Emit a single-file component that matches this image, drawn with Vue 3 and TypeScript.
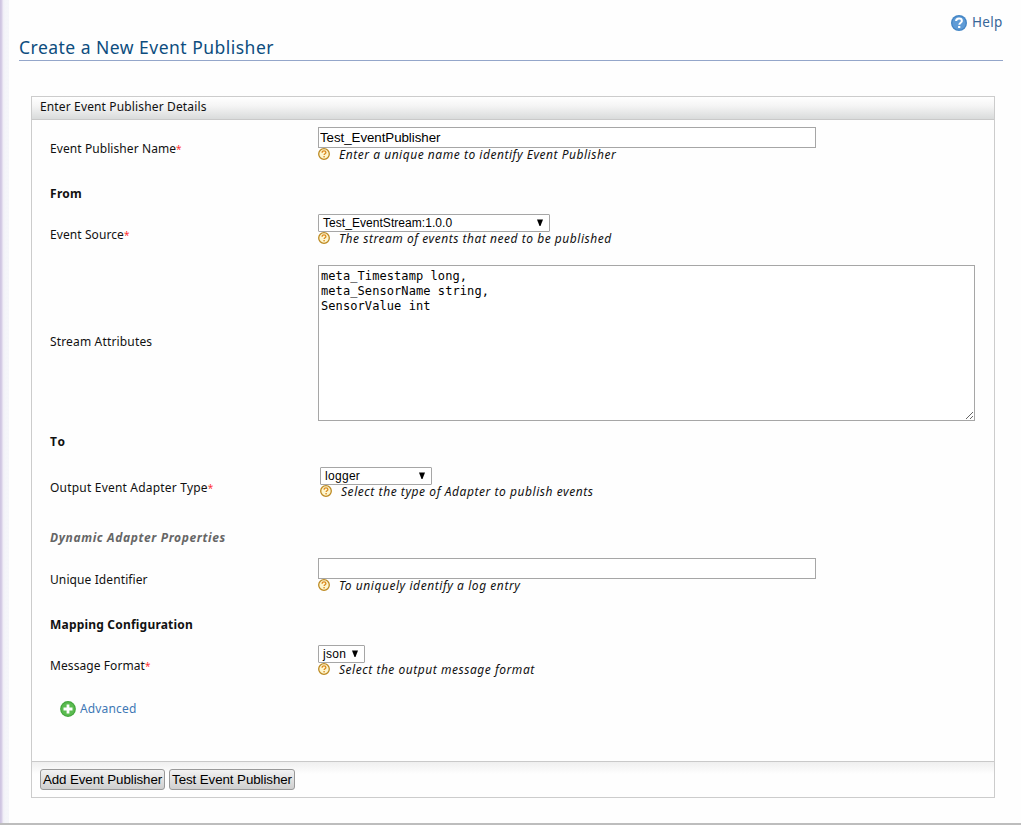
<script setup lang="ts">
import { ref } from 'vue'

const publisherName = ref('Test_EventPublisher')
const uniqueIdentifier = ref('')
const attributes = ref('meta_Timestamp long,\nmeta_SensorName string,\nSensorValue int')
</script>

<template>
  <div class="page">
    <svg class="defs" width="0" height="0" aria-hidden="true">
      <symbol id="hint-icon" viewBox="0 0 12 12">
        <circle cx="6" cy="6" r="5.3" fill="#fdf6cf" stroke="#bd8a22" stroke-width="1.3" />
        <path d="M4.1 4.7C4.1 3.4 5 2.9 6 2.9s1.9.6 1.9 1.6c0 1.2-1.8 1.3-1.8 2.6" fill="none" stroke="#dc8a1e" stroke-width="1.3" />
        <rect x="5.4" y="8" width="1.4" height="1.4" fill="#dc8a1e" />
      </symbol>
    </svg>

    <div class="help-bar">
      <svg width="16" height="16" viewBox="0 0 16 16">
        <circle cx="8" cy="8" r="8" fill="#4486c6" />
        <circle cx="8" cy="8" r="6.6" fill="#5f9bd6" />
        <path d="M5.1 6.1C5.1 4.4 6.3 3.5 8 3.5s2.9.9 2.9 2.4c0 1.8-2.6 1.9-2.6 3.9" fill="none" stroke="#fff" stroke-width="2" />
        <rect x="7.1" y="11" width="2.2" height="2" fill="#fff" />
      </svg>
      <a class="help">Help</a>
    </div>
    <h2 class="title"><span>Create a New Event Publisher</span></h2>

    <form class="panel" @submit.prevent>
      <div class="panel-head"><span class="t-head">Enter Event Publisher Details</span></div>
      <div class="panel-body">
        <div class="row r-name">
          <label><span class="t-name">Event Publisher Name</span><i class="req">*</i></label>
          <div class="field">
            <input v-model="publisherName" type="text" />
            <p class="hint"><svg><use href="#hint-icon" /></svg><span class="h-name">Enter a unique name to identify Event Publisher</span></p>
          </div>
        </div>
        <div class="row r-from"><b class="t-from">From</b></div>
        <div class="row r-source">
          <label><span class="t-source">Event Source</span><i class="req">*</i></label>
          <div class="field">
            <div class="select s-source"><span>Test_EventStream:1.0.0</span><svg width="6" height="7"><path d="M0 0.5H6L3.5 7H2.5Z" /></svg></div>
            <p class="hint"><svg><use href="#hint-icon" /></svg><span class="h-source">The stream of events that need to be published</span></p>
          </div>
        </div>
        <div class="row r-attrs">
          <label><span class="t-attrs">Stream Attributes</span></label>
          <div class="field"><textarea v-model="attributes" spellcheck="false"></textarea></div>
        </div>
        <div class="row r-to"><b class="t-to">To</b></div>
        <div class="row r-type">
          <label><span class="t-type">Output Event Adapter Type</span><i class="req">*</i></label>
          <div class="field">
            <div class="select s-type"><span>logger</span><svg width="6" height="7"><path d="M0 0.5H6L3.5 7H2.5Z" /></svg></div>
            <p class="hint"><svg><use href="#hint-icon" /></svg><span class="h-type">Select the type of Adapter to publish events</span></p>
          </div>
        </div>
        <div class="row r-dyn"><b class="t-dyn">Dynamic Adapter Properties</b></div>
        <div class="row r-uid">
          <label><span class="t-uid">Unique Identifier</span></label>
          <div class="field">
            <input v-model="uniqueIdentifier" type="text" />
            <p class="hint"><svg><use href="#hint-icon" /></svg><span class="h-uid">To uniquely identify a log entry</span></p>
          </div>
        </div>
        <div class="row r-map"><b class="t-map">Mapping Configuration</b></div>
        <div class="row r-format">
          <label><span class="t-format">Message Format</span><i class="req">*</i></label>
          <div class="field">
            <div class="select s-format"><span>json</span><svg width="6" height="7"><path d="M0 0.5H6L3.5 7H2.5Z" /></svg></div>
            <p class="hint"><svg><use href="#hint-icon" /></svg><span class="h-format">Select the output message format</span></p>
          </div>
        </div>
        <div class="row r-adv">
          <svg width="16" height="16" viewBox="0 0 16 16">
            <circle cx="8" cy="8" r="7.9" fill="#43a63c" />
            <circle cx="8" cy="8" r="6.7" fill="#5bbb50" />
            <path d="M8 3.5V12.5M3.5 8H12.5" stroke="#fff" stroke-width="2.8" />
          </svg>
          <a class="t-adv">Advanced</a>
        </div>
      </div>
      <div class="panel-foot">
        <button type="button" class="b-add">Add Event Publisher</button>
        <button type="button" class="b-test">Test Event Publisher</button>
      </div>
    </form>
  </div>
</template>

<style>
body { background: #fdfdfd; overflow: hidden; }
</style>

<style scoped>
* { box-sizing: border-box; }
.page {
  height: 825px;
  padding: 14px 18px 0 19px;
  border-bottom: 2px solid #bdbdbd;
  background: linear-gradient(90deg, #cbc1df 0, #d9d1e8 2px, #efedf6 3px, #f4f5f9 5px, #f5f6fa 9px, transparent 9px) #fefefe;
  font: 12px/16px "Noto Sans", "Open Sans", sans-serif;
  color: #111;
}
.defs { position: absolute; }
.help-bar { display: flex; justify-content: flex-end; align-items: center; gap: 5px; height: 17px; padding-top: 1px; }
.help { font-size: 13.5px; letter-spacing: .3px; color: #386698; width: 31px; white-space: nowrap; margin-top: -2px; }
.title {
  margin: 0; height: 30px; border-bottom: 1px solid #94a6ca;
  font-size: 17.5px; font-weight: 400; line-height: 33px; letter-spacing: .48px; color: #0d4d7e; white-space: nowrap;
}
.panel { width: 964px; height: 702px; margin: 35px 0 0 12px; border: 1px solid #ccc; display: flex; flex-direction: column; background: #fefefe; }
.panel-head { height: 23px; padding-left: 8px; line-height: 19px; border-bottom: 1px solid #c9c9c9; background: linear-gradient(#fff, #f5f5f5 40%, #d9dbdb); }
.panel-body { flex: 1; padding-left: 18px; }
.row { display: flex; align-items: center; white-space: nowrap; }
.row label { width: 268px; }
.row b { font-weight: 700; }
.field { align-self: flex-start; }
.req { color: #f33; font-style: normal; font-size: 10px; line-height: 1; }
.t-head { letter-spacing: .14px; }
.t-name, .t-source { letter-spacing: .08px; }
.t-attrs, .t-adv { letter-spacing: .16px; }
.t-type { letter-spacing: .2px; }
.t-uid { letter-spacing: .1px; }
.t-format { letter-spacing: .08px; }
.t-from { letter-spacing: .3px; }
.t-to { letter-spacing: 1.5px; }
.t-map { letter-spacing: .2px; }
.t-dyn { letter-spacing: .62px; }
.h-name, .h-source, .h-format { letter-spacing: .53px; }
.h-type, .h-uid { letter-spacing: .56px; }
.r-name { height: 57px; }
.r-name .field { padding-top: 7px; }
.r-from { height: 33px; }
.r-source { height: 50px; }
.r-source .field { padding-top: 4px; }
.r-attrs { height: 165px; }
.r-attrs label { padding-bottom: 2px; }
.r-attrs .field { padding-top: 5px; }
.r-to { height: 34px; }
.r-type { height: 58px; }
.r-type .field { padding: 8px 0 0 2px; }
.r-dyn { height: 41px; color: #666; font-style: italic; }
.r-uid { height: 44px; }
.r-map { height: 45px; }
.r-map + .r-format { margin-top: -2px; }
.r-format { height: 41px; }
.r-adv { height: 46px; padding-left: 10px; gap: 4px; color: #3e78b5; }
input {
  display: block; width: 498px; height: 21px; padding: 0 1px; border: 1px solid #a6a6a6; border-radius: 0;
  background: #fff; font: 13.33px "Liberation Sans", Arial, sans-serif; letter-spacing: -.06px; color: #000; outline: none;
}
textarea {
  display: block; width: 657px; height: 156px; padding: 3px 2px; border: 1px solid #a6a6a6; border-radius: 0; background: #fff;
  font: 12px/15px "DejaVu Sans Mono", monospace; letter-spacing: .08px; color: #000; outline: none; resize: both;
}
.select {
  display: flex; align-items: center; justify-content: space-between; height: 18px; padding: 0 6px 0 4px;
  border: 1px solid #a6a6a6; border-radius: 1px; background: #fff; font: 12px "Liberation Sans", Arial, sans-serif; color: #000;
}
.select svg { margin-bottom: 2px; }
.s-source { width: 232px; letter-spacing: .05px; }
.s-type { width: 112px; letter-spacing: .3px; }
.s-format { width: 47px; letter-spacing: .3px; }
.hint { display: flex; align-items: center; height: 14px; margin: 0; font-style: italic; }
.hint svg { width: 12px; height: 12px; margin: 0 9px 2px 0; }
.panel-foot { display: flex; gap: 4px; height: 36px; padding: 7px 8px; border-top: 1px solid #c9c9c9; background: linear-gradient(#efefef, #fefefe 12px); }
button {
  height: 21px; padding: 0; border: 1px solid #999; border-radius: 3px; background: linear-gradient(#f2f2f2, #ddd 60%, #cfcfcf);
  font: 13.33px "Liberation Sans", Arial, sans-serif; letter-spacing: -.08px; color: #000; white-space: nowrap;
}
.b-add { width: 125px; }
.b-test { width: 126px; }
</style>
